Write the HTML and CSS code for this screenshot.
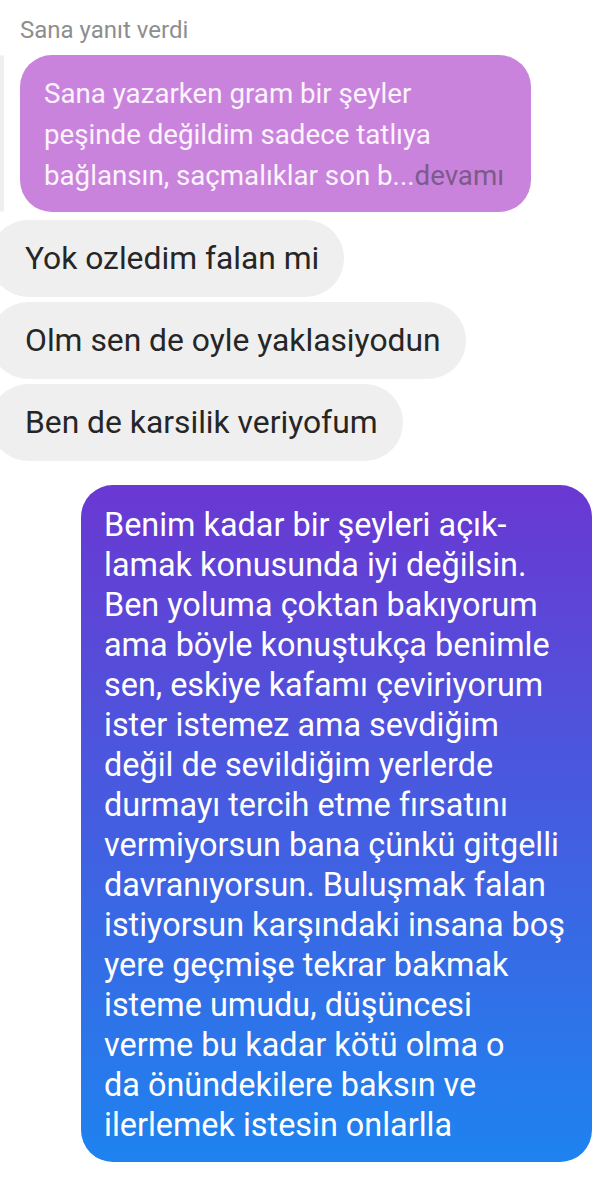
FILE: index.html
```html
<!DOCTYPE html>
<html lang="tr">
<head>
    <meta charset="utf-8">
    <meta name="viewport" content="width=device-width, initial-scale=1">
    <title>Mesajlar</title>
    <link rel="stylesheet" href="styles.css">
</head>
<body>
    <div class="thread">
        <div class="reply-label">Sana yanıt verdi</div>
        <div class="reply">
            <div class="reply-bar"></div>
            <div class="bubble quoted">
                Sana yazarken gram bir şeyler<br>
                peşinde değildim sadece tatlıya<br>
                bağlansın, saçmalıklar son b...<span class="more">devamı</span>
            </div>
        </div>

        <div class="bubble theirs">Yok ozledim falan mi</div>
        <div class="bubble theirs">Olm sen de oyle yaklasiyodun</div>
        <div class="bubble theirs">Ben de karsilik veriyofum</div>

        <div class="bubble mine">
            Benim kadar bir şeyleri açık-<br>
            lamak konusunda iyi değilsin.<br>
            Ben yoluma çoktan bakıyorum<br>
            ama böyle konuştukça benimle<br>
            sen, eskiye kafamı çeviriyorum<br>
            ister istemez ama sevdiğim<br>
            değil de sevildiğim yerlerde<br>
            durmayı tercih etme fırsatını<br>
            vermiyorsun bana çünkü gitgelli<br>
            davranıyorsun. Buluşmak falan<br>
            istiyorsun karşındaki insana boş<br>
            yere geçmişe tekrar bakmak<br>
            isteme umudu, düşüncesi<br>
            verme bu kadar kötü olma o<br>
            da önündekilere baksın ve<br>
            ilerlemek istesin onlarlla
        </div>
    </div>
</body>
</html>
```

FILE: styles.css
```css
body{
    margin:0;
    background:#fff;
    font-family:Roboto, "Noto Sans", sans-serif;
}

.thread{
    display:flex;
    flex-direction:column;
    align-items:flex-start;
    padding-top:16px;
}

.reply-label{
    padding-left:20px;
    font-size:24px;
    line-height:28px;
    color:#8e8e8e;
}

.reply{
    display:flex;
    gap:16px;
    margin-top:11px;
}
.reply-bar{
    width:4px;
    background:#efefef;
    border-radius:2px;
}

.bubble{
    box-sizing:border-box;
}

.quoted{
    width:511px;
    padding:18px 24px 16px;
    border-radius:32px;
    background:#c983dc;
    color:#fcf3fd;
    font-size:27.7px;
    line-height:41px;
}
.quoted .more{
    color:#7c5a8a;
}

.theirs{
    height:77px;
    margin-left:-10px;
    padding:0 25px 0 35px;
    border-radius:38px;
    background:#efefef;
    color:#262626;
    font-size:31.8px;
    line-height:77px;
    white-space:nowrap;
}
.theirs + .theirs{
    margin-top:5px;
}
.reply + .theirs{
    margin-top:8px;
}

.mine{
    width:511px;
    margin:24px 0 0 81px;
    padding:20px 23px 17px;
    border-radius:32px;
    background:linear-gradient(#6a38d2, #1e83ef);
    color:#fff;
    font-size:32.4px;
    line-height:40px;
    white-space:nowrap;
}
```
